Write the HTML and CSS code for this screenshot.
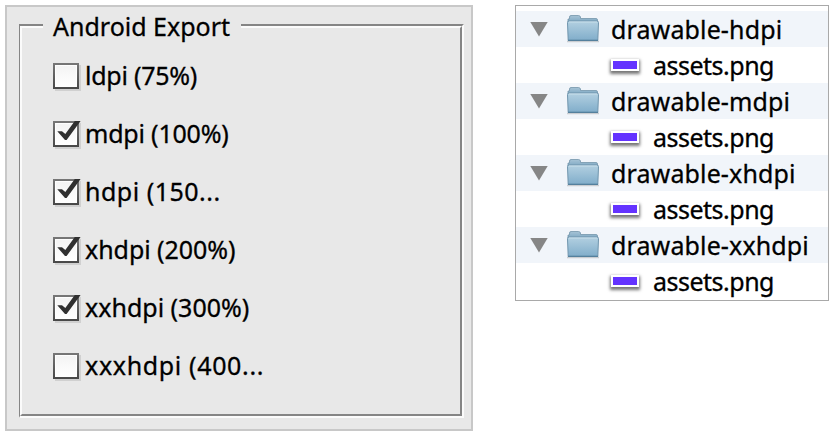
FILE: index.html
```html
<!DOCTYPE html>
<html lang="en">
<head>
<meta charset="utf-8">
<title>Android Export</title>
<link rel="stylesheet" href="styles.css">
</head>
<body>
<svg width="0" height="0" class="defs">
  <defs>
    <linearGradient id="front" x1="0" y1="0" x2="0" y2="1"><stop offset="0" stop-color="#b3d0e1"/><stop offset="1" stop-color="#80adca"/></linearGradient>
    <linearGradient id="back" x1="0" y1="0" x2="0" y2="1"><stop offset="0" stop-color="#a6c3d5"/><stop offset="1" stop-color="#7fa9c4"/></linearGradient>
    <symbol id="folder" viewBox="0 0 34 28">
      <path d="M1 26.5h32" stroke="#000" stroke-opacity=".16" stroke-width="1.5"/>
      <path d="M2 6V4h1.5V2Q3.500 .5 5 .5h7.500Q14 .5 14.500 2v1.500h15.500Q31.500 3.500 31.500 5v2H2z" fill="url(#back)" stroke="#7396ab" stroke-width=".8"/>
      <path d="M1.500 7.500Q1.500 6 3 6h28Q32.500 6 32.500 7.500L31.800 25.500H2.200z" fill="url(#front)" stroke="#7095ad" stroke-width="1"/>
      <path d="M3 7h28" stroke="#c8dfea" stroke-width="1"/>
      <path d="M2 25.300h30" stroke="#527e9b" stroke-width="1.200"/>
    </symbol>
    <symbol id="check" viewBox="0 0 30 28">
      <path d="M4.300 10.300H9L12.300 13L21.800 0H27.600L13.600 19H12z" fill="#303030"/>
    </symbol>
  </defs>
</svg>
<main class="page">
  <section class="panel">
    <div class="group">
      <h1 class="legend">Android Export</h1>
      <div class="options">
        <label class="option"><span class="box"></span><span class="label t1">ldpi (75%)</span></label>
        <label class="option"><span class="box"><svg class="tick"><use href="#check"/></svg></span><span class="label t2">mdpi (100%)</span></label>
        <label class="option"><span class="box"><svg class="tick"><use href="#check"/></svg></span><span class="label t3">hdpi (150...</span></label>
        <label class="option"><span class="box"><svg class="tick"><use href="#check"/></svg></span><span class="label t4">xhdpi (200%)</span></label>
        <label class="option"><span class="box"><svg class="tick"><use href="#check"/></svg></span><span class="label">xxhdpi (300%)</span></label>
        <label class="option"><span class="box"></span><span class="label t6">xxxhdpi (400...</span></label>
      </div>
    </div>
  </section>
  <section class="files">
    <div class="row dir"><span class="arrow"></span><svg class="folder"><use href="#folder"/></svg><span>drawable-hdpi</span></div>
    <div class="row file"><span class="thumb"></span><span class="asset">assets.png</span></div>
    <div class="row dir"><span class="arrow"></span><svg class="folder"><use href="#folder"/></svg><span>drawable-mdpi</span></div>
    <div class="row file"><span class="thumb"></span><span class="asset">assets.png</span></div>
    <div class="row dir"><span class="arrow"></span><svg class="folder"><use href="#folder"/></svg><span>drawable-xhdpi</span></div>
    <div class="row file"><span class="thumb"></span><span class="asset">assets.png</span></div>
    <div class="row dir"><span class="arrow"></span><svg class="folder"><use href="#folder"/></svg><span>drawable-xxhdpi</span></div>
    <div class="row file"><span class="thumb"></span><span class="asset">assets.png</span></div>
  </section>
</main>
</body>
</html>
```
FILE: styles.css
```css
* { box-sizing: border-box; }
body { margin: 0; background: #fff; color: #000; font: 25px/36px "Noto Sans", "Open Sans", sans-serif; -webkit-text-stroke: .3px #000; overflow: hidden; }
.defs { position: absolute; }
.page { display: flex; align-items: flex-start; gap: 42px; padding: 5px; height: 436px; }
.panel { flex: none; width: 468px; height: 426px; padding: 17px 7px 11px 12px; background: #e8e8e8; border: 2px solid #c8c8c8; }
.group { height: 394px; border: 2px solid #fbfbfb; border-top-color: #858585; border-left: 1px solid #858585; }
.legend { width: 198px; height: 36px; margin: -18px 0 -18px 23px; padding-left: 10px; background: #e8e8e8; font: inherit; position: relative; white-space: nowrap; }
.options { height: 390px; padding: 19px 0 0 31px; border: 2px solid #858585; border-top-color: #fbfbfb; border-left-color: #fbfbfb; }
.option { display: flex; align-items: center; gap: 6px; height: 58px; white-space: nowrap; }
.box { position: relative; flex: none; width: 26px; height: 26px; background: linear-gradient(#f3f3f3, #fff) padding-box, linear-gradient(#777, #484848) border-box; border: 2px solid transparent; box-shadow: 2px 2px 0 #d0d0d0, inset 0 0 1px 1px #fff; }
.label { padding-bottom: 2px; }
.t1 { letter-spacing: -.25px; }
.t2 { letter-spacing: -.2px; }
.t3 { letter-spacing: .5px; }
.t4 { letter-spacing: -.05px; }
.t6 { letter-spacing: .65px; }
.tick { position: absolute; left: -2px; top: -2px; width: 30px; height: 28px; }
.files { flex: none; width: 314px; height: 296px; padding-top: 5px; border: 1px solid #a9a9a9; }
.row { display: flex; align-items: center; height: 36px; white-space: nowrap; }
.dir { background: #f1f5fa; padding-left: 14px; letter-spacing: .13px; }
.arrow { width: 18px; height: 15px; margin: 0 18px 0 0; background: #868686; clip-path: polygon(0 0, 100% 0, 50% 100%); }
.folder { width: 34px; height: 28px; margin-right: 11px; }
.file { padding-left: 95px; }
.asset { letter-spacing: -.5px; }
.thumb { width: 28px; height: 12px; margin-right: 14px; background: #6433ff; border: 2px solid #fff; box-shadow: 0 2px 3px 1px #777; }
```
